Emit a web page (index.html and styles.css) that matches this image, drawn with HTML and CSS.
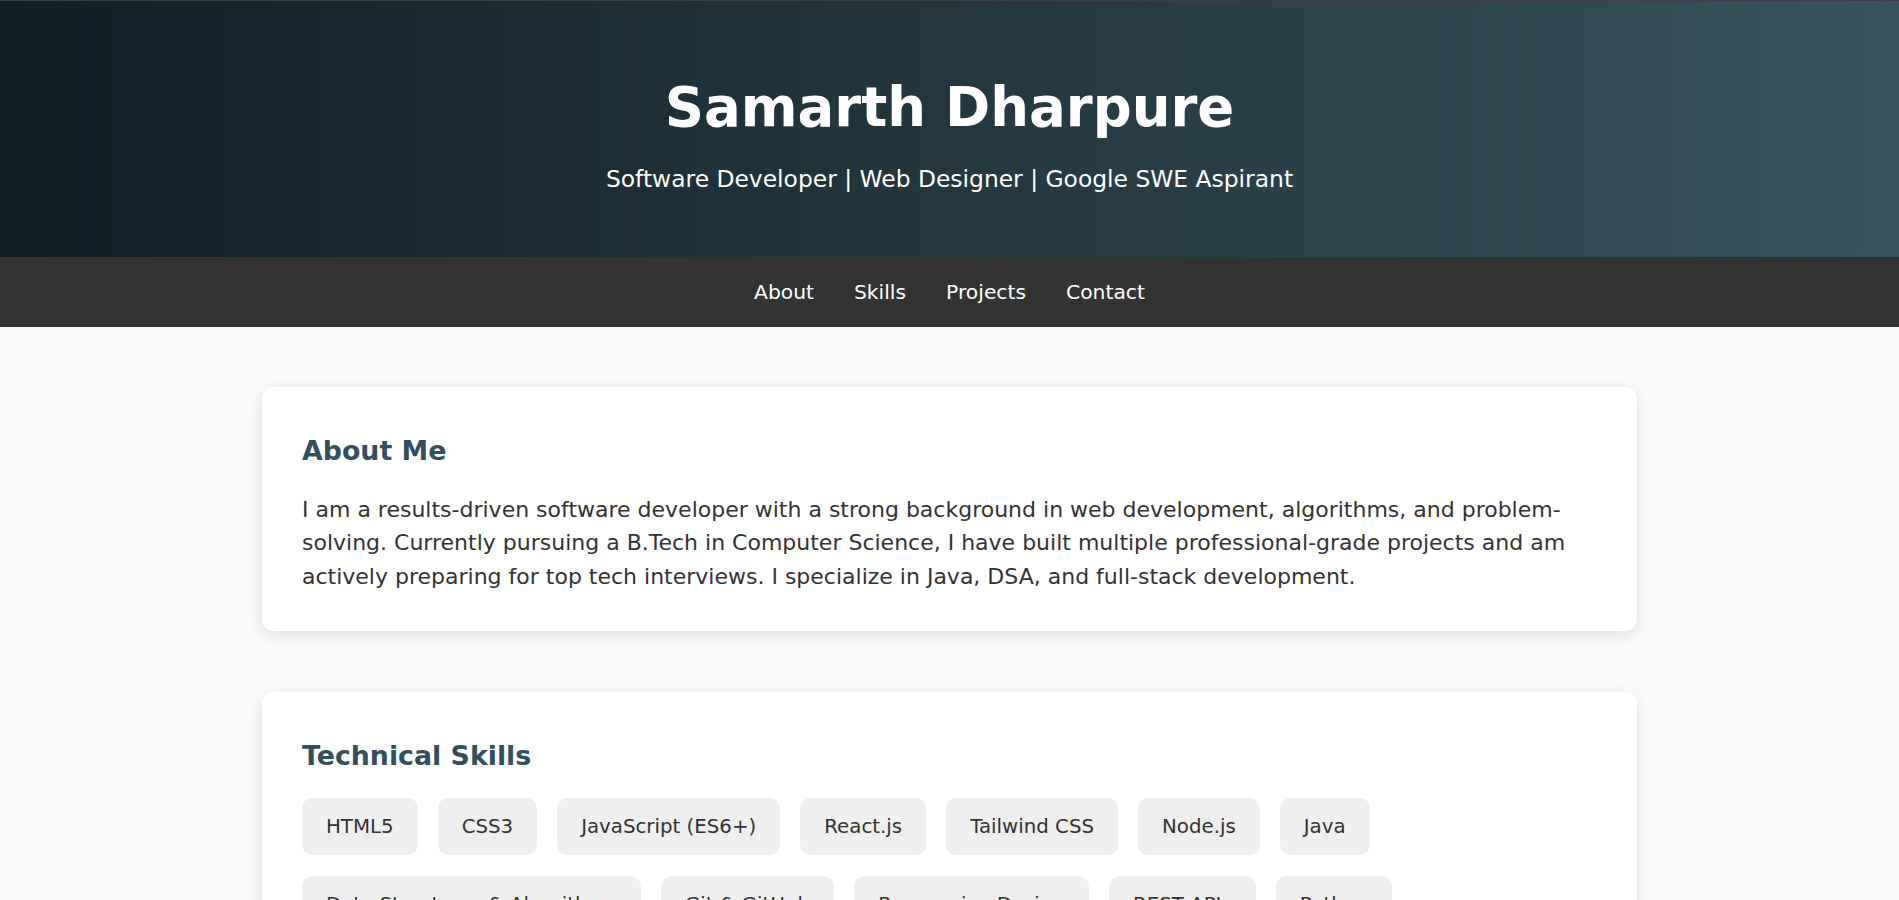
FILE: index.html
```html
<!DOCTYPE html>
<html lang="en">
<head>
<meta charset="utf-8">
<title>Samarth Dharpure</title>
<link rel="stylesheet" href="styles.css">
</head>
<body>
<header class="hero">
  <h1 class="hero-title">Samarth Dharpure</h1>
  <p class="hero-sub">Software Developer | Web Designer | Google SWE Aspirant</p>
</header>
<nav class="nav">
  <a class="nav-link" href="#about">About</a>
  <a class="nav-link" href="#skills">Skills</a>
  <a class="nav-link" href="#projects">Projects</a>
  <a class="nav-link" href="#contact">Contact</a>
</nav>
<main class="main">
  <section class="card" id="about">
    <h2 class="card-title">About Me</h2>
    <p class="card-text">I am a results-driven software developer with a strong background in web development, algorithms, and problem-solving. Currently pursuing a B.Tech in Computer Science, I have built multiple professional-grade projects and am actively preparing for top tech interviews. I specialize in Java, DSA, and full-stack development.</p>
  </section>
  <section class="card" id="skills">
    <h2 class="card-title">Technical Skills</h2>
    <ul class="chips">
      <li class="chip">HTML5</li>
      <li class="chip">CSS3</li>
      <li class="chip">JavaScript (ES6+)</li>
      <li class="chip">React.js</li>
      <li class="chip">Tailwind CSS</li>
      <li class="chip">Node.js</li>
      <li class="chip">Java</li>
      <li class="chip">Data Structures &amp; Algorithms</li>
      <li class="chip">Git &amp; GitHub</li>
      <li class="chip">Responsive Design</li>
      <li class="chip">REST APIs</li>
      <li class="chip">Python</li>
    </ul>
  </section>
</main>
</body>
</html>
```
FILE: styles.css
```css
* { box-sizing: border-box; }

body {
  margin: 0;
  background: #f9f9f9;
  color: #333;
  font-family: "DejaVu Sans", "Open Sans", sans-serif;
}

.hero {
  border-top: 1px solid #3c3f44;
  background: linear-gradient(to right, #101e26, #24373f 50%, #35535f);
  color: #fff;
  text-align: center;
  padding: 74px 20px 61px;
}

.hero-title {
  margin: 0 0 23px;
  font-size: 54.5px;
  font-weight: 700;
  line-height: 65px;
}

.hero-sub {
  margin: 0;
  font-size: 23.4px;
  line-height: 33px;
}

.nav {
  background: #333;
  display: flex;
  justify-content: center;
  padding: 20px;
}

.nav-link {
  color: #fff;
  text-decoration: none;
  font-size: 20.3px;
  line-height: 30px;
  margin: 0 20px;
}

.main {
  max-width: 1375px;
  margin: 60px auto 0;
  display: flex;
  flex-direction: column;
  gap: 61px;
}

.card {
  background: #fff;
  border-radius: 12px;
  box-shadow: 0 4px 16px rgba(0, 0, 0, 0.1);
  padding: 40px 40px 38px;
}

.card-title {
  margin: 6px 0 25px;
  color: #31505f;
  font-size: 26.8px;
  font-weight: 700;
  line-height: 35px;
}

.card-text {
  margin: 0;
  font-size: 22px;
  line-height: 33.3px;
}

.chips {
  list-style: none;
  margin: 0;
  padding: 0;
  display: flex;
  flex-wrap: wrap;
  gap: 21px 20px;
}

.chip {
  background: #efefef;
  border-radius: 10px;
  padding: 12px 24px;
  font-size: 19.8px;
  line-height: 33px;
  color: #333;
}
```
